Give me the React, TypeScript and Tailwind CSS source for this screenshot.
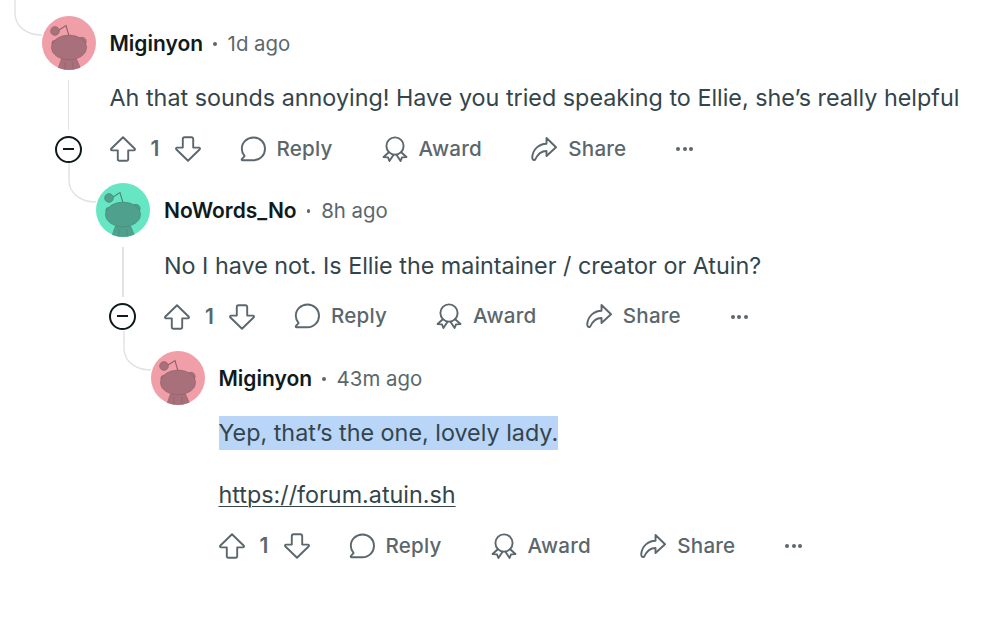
import React from "react";

const Snoo = ({ bg, fg, line }: { bg: string; fg: string; line: string }) => (
  <svg width="54" height="54" viewBox="0 0 54 54" className="shrink-0 block">
    <defs>
      <clipPath id={"c" + bg.slice(1)}><circle cx="27" cy="27" r="27" /></clipPath>
    </defs>
    <g clipPath={`url(#c${bg.slice(1)})`}>
      <rect width="54" height="54" fill={bg} />
      <path d="M17 14 L24 9.5 L27 20" fill="none" stroke={line} strokeWidth="1.1" />
      <circle cx="13" cy="15" r="4.4" fill={fg} stroke={line} strokeWidth="0.6" />
      <circle cx="40" cy="25.5" r="4.2" fill={fg} stroke={line} strokeWidth="0.6" />
      <circle cx="13" cy="27.5" r="3.2" fill={fg} stroke={line} strokeWidth="0.6" />
      <path d="M19 44 C21 40 33 40 35 44 L40 56 H15 Z" fill={fg} stroke={line} strokeWidth="0.6" />
      <ellipse cx="27" cy="31.5" rx="17.6" ry="12.4" fill={fg} stroke={line} strokeWidth="0.6" />
      <path d="M23 46 V54 M31 46 V54" stroke={line} strokeWidth="0.6" />
    </g>
  </svg>
);

const iconProps = {
  width: 26,
  height: 26,
  viewBox: "0 0 26 26",
  fill: "none",
  stroke: "#5b676c",
  strokeWidth: 1.9,
  strokeLinejoin: "round" as const,
  strokeLinecap: "round" as const,
  className: "shrink-0 block",
};

const Up = () => (
  <svg {...iconProps}>
    <path d="M13 1.2 L24.8 12.8 C25.2 13.5 24.8 14.4 24 14.4 H18.2 V23 C18.2 24.1 17.5 24.8 16.5 24.8 H9.5 C8.5 24.8 7.8 24.1 7.8 23 V14.4 H2 C1.2 14.4 0.8 13.5 1.2 12.8 Z" />
  </svg>
);
const Down = () => (
  <svg {...iconProps}>
    <path d="M13 24.8 L24.8 13.2 C25.2 12.5 24.8 11.6 24 11.6 H18.2 V3 C18.2 1.9 17.5 1.2 16.5 1.2 H9.5 C8.5 1.2 7.8 1.9 7.8 3 V11.6 H2 C1.2 11.6 0.8 12.5 1.2 13.2 Z" />
  </svg>
);
const Bubble = () => (
  <svg {...iconProps}>
    <path d="M13.5 1.5 C20 1.5 25 6.5 25 12.8 C25 19.2 20 24.3 13.5 24.3 H2.6 C1.8 24.3 1.4 23.4 2 22.8 L4.6 20.2 C2.9 18.2 1.8 15.6 1.8 12.8 C1.8 6.5 7 1.5 13.5 1.5 Z" />
  </svg>
);
const AwardIcon = () => (
  <svg {...iconProps}>
    <circle cx="13" cy="10" r="8.6" />
    <path d="M6.8 16.2 L1.6 21 L6 21.4 L7.4 25 L11.4 19" />
    <path d="M19.2 16.2 L24.4 21 L20 21.4 L18.6 25 L14.6 19" />
  </svg>
);
const ShareIcon = () => (
  <svg {...iconProps}>
    <path d="M15.5 2 L25 11.3 L15.5 20 V15 C9.5 15 6.5 18.5 4 23.8 C1.8 24.6 1 22.5 1.3 20.5 C2.3 13 8 8 15.5 7.8 Z" />
  </svg>
);

const Action = ({ icon, label, className }: { icon: React.ReactNode; label: string; className: string }) => (
  <div className={`flex items-center gap-[11px] ${className}`}>
    {icon}
    <span className="text-[20.6px] font-medium text-[#5b676c] tracking-[0.2px]">{label}</span>
  </div>
);

const Actions = () => (
  <div className="flex items-center h-[34px]">
    <Up />
    <span className="ml-[13px] w-[11px] text-[21px] font-semibold text-[#5b676c] text-right">1</span>
    <div className="ml-[15px]"><Down /></div>
    <Action icon={<Bubble />} label="Reply" className="ml-[39px]" />
    <Action icon={<AwardIcon />} label="Award" className="ml-[49px]" />
    <Action icon={<ShareIcon />} label="Share" className="ml-[49.5px]" />
    <div className="ml-[50px] flex gap-[2.5px]">
      <span className="w-[4px] h-[4px] rounded-full bg-[#5b676c]" />
      <span className="w-[4px] h-[4px] rounded-full bg-[#5b676c]" />
      <span className="w-[4px] h-[4px] rounded-full bg-[#5b676c]" />
    </div>
  </div>
);

const Connector = () => (
  <svg width="30" height="42" viewBox="0 0 30 42" fill="none" className="absolute left-[-28px] top-[-20px]">
    <path d="M1 0 V17 C1 30 12 39 28 39" stroke="#dfe3e5" strokeWidth="1.4" />
  </svg>
);

const Collapse = () => (
  <>
    <div className="absolute left-[26.4px] top-[64px] h-[50px] w-[1.4px] bg-[#dfe3e5]" />
    <div className="absolute left-[13.2px] top-[119.5px] w-[27px] h-[27px] rounded-full border-2 border-[#0f1a1c] bg-white flex items-center justify-center">
      <span className="w-[11px] h-[2px] bg-[#0f1a1c]" />
    </div>
  </>
);

type Props = {
  name: string;
  time: string;
  bg: string;
  fg: string;
  line: string;
  children?: React.ReactNode;
  body: React.ReactNode;
  className?: string;
};

const Comment = ({ name, time, bg, fg, line, children, body, className = "" }: Props) => (
  <div className={`relative ${className}`}>
    <Connector />
    {children && <Collapse />}
    <div className="flex items-center h-[54px] gap-[14px]">
      <Snoo bg={bg} fg={fg} line={line} />
      <div className="flex items-center pt-[2px]">
        <span className="text-[21px] font-semibold text-[#0f1a1c]">{name}</span>
        <span className="ml-[10px] mr-[11px] w-[3.5px] h-[3.5px] rounded-full bg-[#5b676c]" />
        <span className="text-[20.4px] text-[#5b676c]">{time}</span>
      </div>
    </div>
    <div className="pl-[68px]">
      {body}
      <div className="mt-[17px]"><Actions /></div>
    </div>
    {children}
  </div>
);

export default function App() {
  return (
    <div
      className="w-[1000px] h-[643px] overflow-hidden bg-white pt-[16px] pl-[41.5px]"
      style={{ fontFamily: "Inter, 'Noto Sans', sans-serif" }}
    >
      <Comment
        name="Miginyon"
        time="1d ago"
        bg="#f09ea7"
        fg="#a8707a"
        line="#8f5f68"
        body={
          <p className="mt-[11px] text-[23.33px] leading-[34px] whitespace-nowrap text-[#33454b]">
            Ah that sounds annoying! Have you tried speaking to Ellie, she’s really helpful
          </p>
        }
      >
        <Comment
          className="ml-[54.5px] mt-[17px]"
          name="NoWords_No"
          time="8h ago"
          bg="#66e6c3"
          fg="#4fa08c"
          line="#438a78"
          body={
            <p className="mt-[11.5px] text-[23.33px] leading-[34px] whitespace-nowrap text-[#33454b]">
              No I have not. Is Ellie the maintainer / creator or Atuin?
            </p>
          }
        >
          <Comment
            className="ml-[54.5px] mt-[17.5px]"
            name="Miginyon"
            time="43m ago"
            bg="#f09ea7"
            fg="#a8707a"
            line="#8f5f68"
            body={
              <>
                <p className="mt-[11px] text-[23.33px] leading-[34px] whitespace-nowrap text-[#33454b]">
                  <span className="bg-[#b9d5f8] inline-block">Yep, that’s the one, lovely lady.</span>
                </p>
                <p className="mt-[28px] text-[23.33px] leading-[34px] whitespace-nowrap text-[#33454b] underline underline-offset-[3px] decoration-1">
                  https://forum.atuin.sh
                </p>
              </>
            }
          />
        </Comment>
      </Comment>
    </div>
  );
}
